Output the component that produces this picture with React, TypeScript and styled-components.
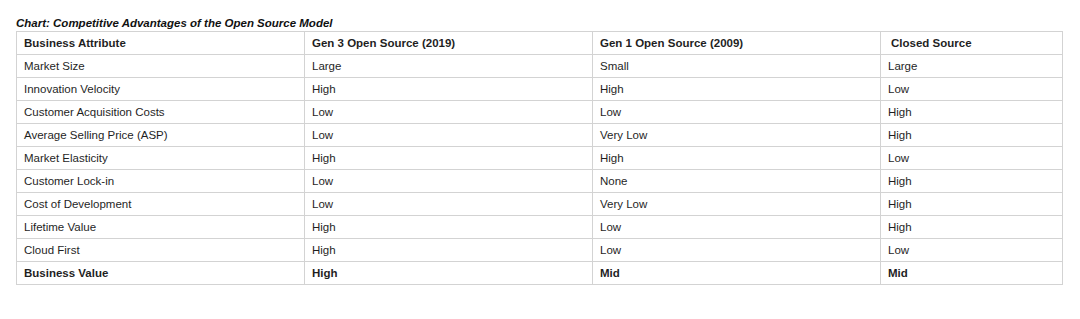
import React from 'react';
import styled, { createGlobalStyle } from 'styled-components';

const GlobalStyle = createGlobalStyle`
  html, body {
    margin: 0;
    padding: 0;
    background: #ffffff;
  }
  body {
    font-family: "Liberation Sans", Arial, sans-serif;
    color: #1f1f1f;
  }
`;

const Page = styled.div`
  width: 1080px;
  height: 319px;
  padding: 17px 0 0 16px;
  box-sizing: border-box;
`;

const Caption = styled.div`
  font-size: 11.5px;
  line-height: 13px;
  font-weight: bold;
  font-style: italic;
  color: #111;
  height: 14px;
`;

const Table = styled.table`
  border-collapse: collapse;
  table-layout: fixed;
  width: 1046px;
  font-size: 11.5px;
`;

const Col = styled.col<{ $w: number }>`
  width: ${(p) => p.$w}px;
`;

const Cell = styled.td<{ $bold?: boolean; $indent?: boolean }>`
  border: 1px solid #d3d3d3;
  height: 23px;
  padding: 0 0 0 ${(p) => (p.$indent ? 10 : 7)}px;
  box-sizing: border-box;
  font-weight: ${(p) => (p.$bold ? 'bold' : 'normal')};
  color: #1f1f1f;
  white-space: nowrap;
  vertical-align: middle;
`;

const headers = [
  'Business Attribute',
  'Gen 3 Open Source (2019)',
  'Gen 1 Open Source (2009)',
  'Closed Source',
];

const widths = [288, 288, 288, 182];

const rows: string[][] = [
  ['Market Size', 'Large', 'Small', 'Large'],
  ['Innovation Velocity', 'High', 'High', 'Low'],
  ['Customer Acquisition Costs', 'Low', 'Low', 'High'],
  ['Average Selling Price (ASP)', 'Low', 'Very Low', 'High'],
  ['Market Elasticity', 'High', 'High', 'Low'],
  ['Customer Lock-in', 'Low', 'None', 'High'],
  ['Cost of Development', 'Low', 'Very Low', 'High'],
  ['Lifetime Value', 'High', 'Low', 'High'],
  ['Cloud First', 'High', 'Low', 'Low'],
];

const total = ['Business Value', 'High', 'Mid', 'Mid'];

const App: React.FC = () => (
  <>
    <GlobalStyle />
    <Page>
      <Caption>Chart: Competitive Advantages of the Open Source Model</Caption>
      <Table>
        <colgroup>
          {widths.map((w, i) => (
            <Col key={i} $w={w} />
          ))}
        </colgroup>
        <tbody>
          <tr>
            {headers.map((h, i) => (
              <Cell key={h} $bold $indent={i === 3}>
                {h}
              </Cell>
            ))}
          </tr>
          {rows.map((row) => (
            <tr key={row[0]}>
              {row.map((c, i) => (
                <Cell key={i}>{c}</Cell>
              ))}
            </tr>
          ))}
          <tr>
            {total.map((c, i) => (
              <Cell key={i} $bold>
                {c}
              </Cell>
            ))}
          </tr>
        </tbody>
      </Table>
    </Page>
  </>
);

export default App;
